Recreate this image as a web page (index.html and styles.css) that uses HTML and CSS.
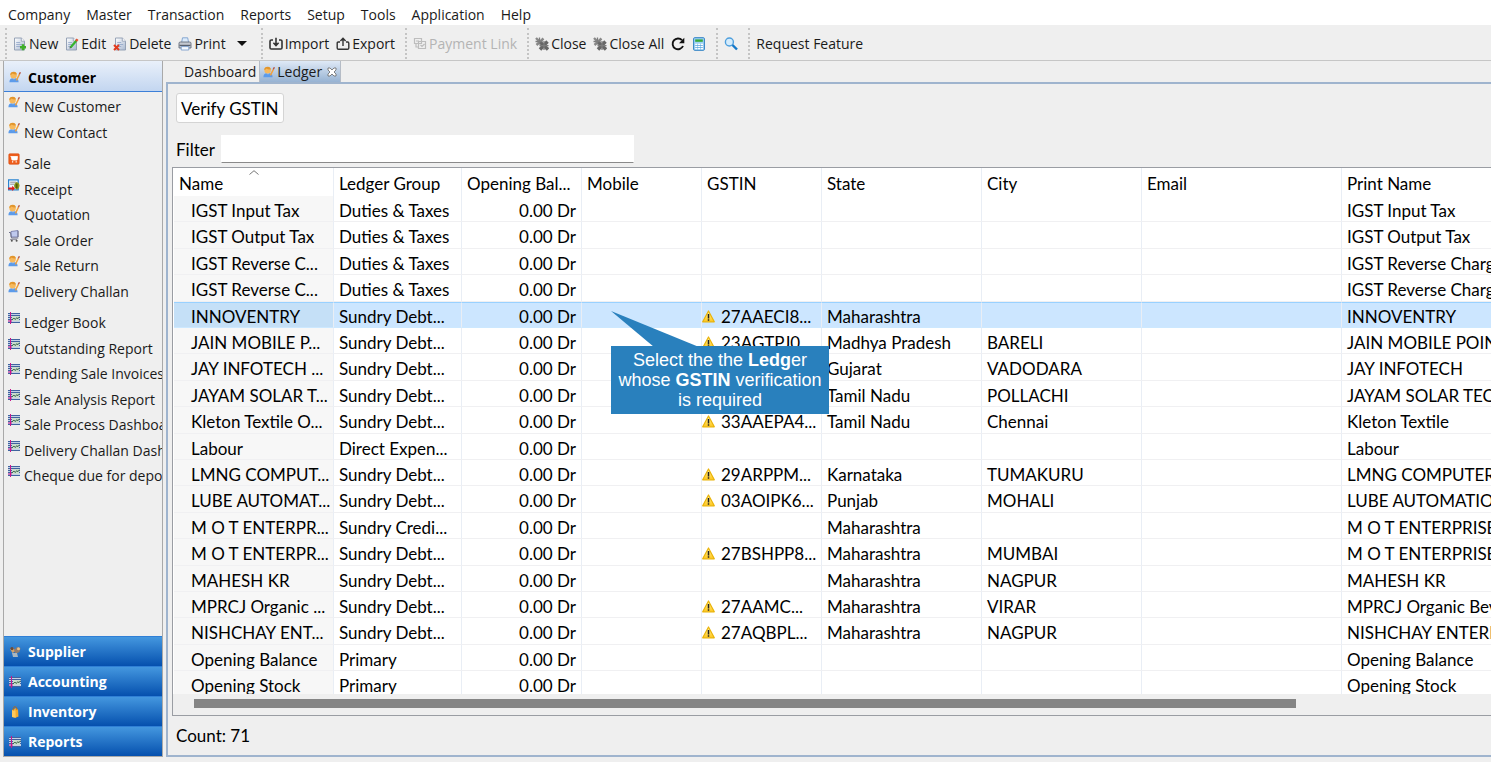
FILE: index.html
```html
<!DOCTYPE html>
<html lang="en">
<head>
    <meta charset="utf-8">
    <title>Ledger</title>
    <link rel="stylesheet" href="styles.css">
</head>
<body>
    <!-- Shared icons -->
    <svg class="sprite" aria-hidden="true">
        <defs>
            <linearGradient id="paper" x1="0" y1="0" x2="1" y2="1">
                <stop offset="0" stop-color="#ffffff"/>
                <stop offset="1" stop-color="#a9b8d0"/>
            </linearGradient>
            <linearGradient id="warn" x1="0" y1="0" x2="0" y2="1">
                <stop offset="0" stop-color="#fff2a0"/>
                <stop offset="1" stop-color="#ffc61a"/>
            </linearGradient>
        </defs>
        <symbol id="i-page" viewBox="0 0 14 14">
            <path d="M1.5 1h6.8l3.2 3.2V13h-10z" fill="url(#paper)" stroke="#8d9bb0" stroke-width=".9"/>
            <path d="M8.3 1v3.2h3.2" fill="#fff" stroke="#8d9bb0" stroke-width=".8"/>
            <path d="M3.2 5.5h4M3.2 7.5h6M3.2 9.5h4" stroke="#8fa5c8" stroke-width=".8"/>
        </symbol>
        <symbol id="i-new" viewBox="0 0 14 14">
            <use href="#i-page"/>
            <path d="M10 7.2v6M7 10.2h6" stroke="#3fae2a" stroke-width="2.4"/>
        </symbol>
        <symbol id="i-edit" viewBox="0 0 14 14">
            <use href="#i-page"/>
            <path d="M5.5 10.5L11.5 3.5" stroke="#37b32e" stroke-width="2.2"/>
            <path d="M11 4l1.6-1.8" stroke="#e2502f" stroke-width="2.4"/>
            <path d="M4.5 11.6l.4-1.8 1.4 1.1z" fill="#444"/>
        </symbol>
        <symbol id="i-delete" viewBox="0 0 14 14">
            <use href="#i-page" x="1"/>
            <path d="M1 8l5 5M6 8l-5 5" stroke="#e23a1c" stroke-width="2"/>
        </symbol>
        <symbol id="i-print" viewBox="0 0 14 14">
            <path d="M3.5 6L4.5.8h5.2L10.7 6z" fill="#dcebfb" stroke="#6f96c8" stroke-width=".8"/>
            <path d="M1 6.2q0-1.2 1.4-1.2h9.2q1.4 0 1.4 1.2V11H1z" fill="#c3c8d0" stroke="#656d7a" stroke-width=".9"/>
            <path d="M1.5 8.4h11" stroke="#59616e" stroke-width="1.2"/>
            <path d="M3.2 9.6h7.6V13H3.2z" fill="#f6faff" stroke="#6f96c8" stroke-width=".8"/>
        </symbol>
        <symbol id="i-import" viewBox="0 0 14 14">
            <path d="M4 3H2.3Q1 3 1 4.3v6.4Q1 12 2.3 12h9.4q1.3 0 1.3-1.3V4.3Q13 3 11.7 3H10M7 .8v7M4.4 5.8L7 8.5l2.6-2.7" fill="none" stroke="#333" stroke-width="1.6"/>
        </symbol>
        <symbol id="i-export" viewBox="0 0 14 14">
            <path d="M4 5H2.3Q1.2 5 1.2 6.2V11q0 1.3 1.3 1.3h9Q12.8 12.3 12.8 11V6.2Q12.8 5 11.7 5H10M7 9V1.5M4.4 4L7 1.3 9.6 4" fill="none" stroke="#333" stroke-width="1.4"/>
        </symbol>
        <symbol id="i-pay" viewBox="0 0 14 14">
            <path d="M1.5 1.5h7v5h-7zM5.5 4.5h7v7h-7zM3 4h3M7.5 8l1.5 1.5L11.5 7M3 7v3h2" fill="none" stroke="#bdbdbd" stroke-width="1.2"/>
        </symbol>
        <symbol id="i-close" viewBox="0 0 14 14">
            <path d="M1 1l7 7M8.5 1.5L1.5 8" stroke="#888" stroke-width="2.4"/>
            <path d="M5 5l8 7.5M12.5 4.5L5 12.5" stroke="#666" stroke-width="3.4"/>
            <path d="M.5 4.5h7M4.5.5v7M9 4v9M4.5 8.7h9" stroke="#7d7d7d" stroke-width="1.3"/>
        </symbol>
        <symbol id="i-refresh" viewBox="0 0 14 14">
            <path d="M12 9A5.4 5.4 0 1 1 11 3.2" fill="none" stroke="#111" stroke-width="1.9"/>
            <path d="M13.3.8v5.4H8z" fill="#111"/>
        </symbol>
        <symbol id="i-calc" viewBox="0 0 14 14">
            <rect x="1.6" y=".7" width="10.8" height="12.6" rx="1" fill="#9fd2f5" stroke="#2f80c3"/>
            <path d="M3.2 3.6h7.6" stroke="#39a83a" stroke-width="2.4"/>
            <path d="M3.2 7.5h2m.9 0h2m.9 0h2M3.2 9.5h2m.9 0h2m.9 0h2M3.2 11.5h2m.9 0h2m.9 0h2" stroke="#fff" stroke-width="1.3"/>
            <path d="M3.2 8.5h7.6M3.2 10.5h7.6" stroke="#4d97d2" stroke-width=".6"/>
        </symbol>
        <symbol id="i-search" viewBox="0 0 14 14">
            <circle cx="5.4" cy="5" r="4" fill="#d5ecfc" stroke="#4e9fdd" stroke-width="1.4"/>
            <path d="M8.5 8l4.5 4.5" stroke="#1479c9" stroke-width="2.4"/>
        </symbol>
        <symbol id="i-user" viewBox="0 0 12 12">
            <path d="M.4 11.3q0-4 3.4-4h2.4q3.4 0 3.4 4z" fill="#5c9bea"/>
            <path d="M3.600 7.300L5 8.600l1.400-1.300z" fill="#a9cbf5"/>
            <circle cx="4.6" cy="4.3" r="3.2" fill="#f7b95c"/>
            <path d="M1.2 4q.2-3.3 3.6-3.3Q7.6.7 7.8 3.4 4.8 3.6 3.6 2.4 2.8 3.8 1.2 4z" fill="#e2952c"/>
            <path d="M7.4 9.4L10.4 3.4" stroke="#f3a13b" stroke-width="1.5"/>
            <path d="M10.3 3.4L11.4 1.2" stroke="#b5533f" stroke-width="1.4"/>
        </symbol>
        <symbol id="i-sale" viewBox="0 0 12 12">
            <rect x=".8" y=".8" width="10.4" height="10.4" rx="1" fill="#ee5f1d" stroke="#d9480c" stroke-width=".6"/>
            <path d="M2.500 3.500h7L9 7H4L3.200 3.500" fill="#fff" stroke="#fff" stroke-width=".8"/>
            <path d="M4 8.800h1.200m2.400 0h1.200" stroke="#fff" stroke-width="1.2"/>
        </symbol>
        <symbol id="i-receipt" viewBox="0 0 12 12">
            <path d="M.6.8h9.600v10H.6z" fill="#eef6ff" stroke="#2b84d0" stroke-width="1.2"/>
            <path d="M2.200 3.200h6M2.200 5.200h4" stroke="#888" stroke-width=".9"/>
            <path d="M8.500 3q3 .8 3 3.800t-2.600 4Q6 9.500 6 6.800T8.500 3z" fill="#8d9a1c"/>
            <path d="M8.700 4.500v5M7.400 6h2.600M7.400 8h2.600" stroke="#454f08" stroke-width=".8"/>
            <path d="M.2 8.500h4V6.800l2.800 2.700-2.800 2.500v-1.600h-4z" fill="#e01b1b"/>
        </symbol>
        <symbol id="i-order" viewBox="0 0 12 12">
            <path d="M3 1.500l7-1v6.500H3z" fill="#bfc9ee" stroke="#6e74a3" stroke-width=".8"/>
            <path d="M1 2.500h1.500l1 5.500h6.800M10 7V1" fill="none" stroke="#70738c"/>
            <path d="M2 9.500h7" stroke="#9b9ba6" stroke-width="1.2"/>
            <circle cx="3.8" cy="10.7" r="1" fill="#555"/>
            <circle cx="8.6" cy="10.7" r="1" fill="#555"/>
        </symbol>
        <symbol id="i-report" viewBox="0 0 12 12">
            <path d="M0 1h12v10H0z" fill="#c3d1e6"/>
            <path d="M0 1.5h12M0 3.5h12M0 5.5h12M0 7.5h12M0 10.5h12" stroke="#40639f" stroke-width="1"/>
            <path d="M4 4h7v5H4z" fill="#c9dccd"/>
            <path d="M4 8l1.8-2 1.500 1.500L8.700 5.700l1.200 1L11.500 4.700" fill="none" stroke="#28583a" stroke-width=".9"/>
            <path d="M2.500 0v12M0 9h4" stroke="#c8178c" stroke-width="1"/>
        </symbol>
        <symbol id="i-supplier" viewBox="0 0 12 12">
            <path d="M1 3l3-1.500L6.500 5l-3 2z" fill="#d7a36a"/>
            <path d="M5 4l3-3 3.500 1-1 4-4 2z" fill="#8f7c6e"/>
            <path d="M3 7h5l1 4H4z" fill="#a9b6bf"/>
            <circle cx="3" cy="2.6" r="1.6" fill="#6a4a38"/>
            <circle cx="9.5" cy="2.8" r="1.5" fill="#e8c08a"/>
        </symbol>
        <symbol id="i-bag" viewBox="0 0 12 12">
            <path d="M3 4l4-2 2 1.500.5 7-3 1.300L3 11z" fill="#f5ab2c"/>
            <path d="M3 4l3.500.6.2 7.200L3 11z" fill="#ffc95c"/>
            <path d="M4.200 4.500Q4 .5 6 .6t2 3.500" fill="none" stroke="#b3661a" stroke-width=".9"/>
        </symbol>
        <symbol id="i-warn" viewBox="0 0 13 13">
            <path d="M6.5 1L12.3 11.800H.7z" fill="url(#warn)" stroke="#eab308" stroke-width="1.2" stroke-linejoin="round"/>
            <path d="M6.500 4v4.400M6.500 9.300v1.500" stroke="#222" stroke-width="1.5"/>
        </symbol>
    </svg>

    <!-- Menu -->
    <nav class="menubar">
        <a href="#">Company</a>
        <a href="#">Master</a>
        <a href="#">Transaction</a>
        <a href="#">Reports</a>
        <a href="#">Setup</a>
        <a href="#">Tools</a>
        <a href="#">Application</a>
        <a href="#">Help</a>
    </nav>

    <!-- Toolbar -->
    <div class="toolbar">
        <div class="tool-group">
            <button><svg><use href="#i-new"/></svg>New</button>
            <button><svg><use href="#i-edit"/></svg>Edit</button>
            <button><svg><use href="#i-delete"/></svg>Delete</button>
            <button><svg><use href="#i-print"/></svg>Print</button>
            <button class="drop" aria-label="Print options"></button>
        </div>
        <div class="tool-group">
            <button><svg><use href="#i-import"/></svg>Import</button>
            <button><svg><use href="#i-export"/></svg>Export</button>
        </div>
        <div class="tool-group">
            <button disabled><svg><use href="#i-pay"/></svg>Payment Link</button>
        </div>
        <div class="tool-group">
            <button><svg><use href="#i-close"/></svg>Close</button>
            <button><svg><use href="#i-close"/></svg>Close All</button>
            <button aria-label="Refresh"><svg><use href="#i-refresh"/></svg></button>
            <button aria-label="Calculator"><svg><use href="#i-calc"/></svg></button>
        </div>
        <div class="tool-group">
            <button aria-label="Search"><svg><use href="#i-search"/></svg></button>
        </div>
        <div class="tool-group">
            <button>Request Feature</button>
        </div>
    </div>

    <div class="workspace">
        <!-- Sidebar -->
        <aside class="sidebar">
            <button class="section-open"><svg><use href="#i-user"/></svg>Customer</button>
            <div class="links">
                <ul>
                    <li><a href="#"><svg><use href="#i-user"/></svg>New Customer</a></li>
                    <li><a href="#"><svg><use href="#i-user"/></svg>New Contact</a></li>
                </ul>
                <ul>
                    <li><a href="#"><svg><use href="#i-sale"/></svg>Sale</a></li>
                    <li><a href="#"><svg><use href="#i-receipt"/></svg>Receipt</a></li>
                    <li><a href="#"><svg><use href="#i-user"/></svg>Quotation</a></li>
                    <li><a href="#"><svg><use href="#i-order"/></svg>Sale Order</a></li>
                    <li><a href="#"><svg><use href="#i-user"/></svg>Sale Return</a></li>
                    <li><a href="#"><svg><use href="#i-user"/></svg>Delivery Challan</a></li>
                </ul>
                <ul>
                    <li><a href="#"><svg><use href="#i-report"/></svg>Ledger Book</a></li>
                    <li><a href="#"><svg><use href="#i-report"/></svg>Outstanding Report</a></li>
                    <li><a href="#"><svg><use href="#i-report"/></svg>Pending Sale Invoices</a></li>
                    <li><a href="#"><svg><use href="#i-report"/></svg>Sale Analysis Report</a></li>
                    <li><a href="#"><svg><use href="#i-report"/></svg>Sale Process Dashboard</a></li>
                    <li><a href="#"><svg><use href="#i-report"/></svg>Delivery Challan Dashboard</a></li>
                    <li><a href="#"><svg><use href="#i-report"/></svg>Cheque due for deposit</a></li>
                </ul>
            </div>
            <button class="section"><svg><use href="#i-supplier"/></svg>Supplier</button>
            <button class="section"><svg><use href="#i-report"/></svg>Accounting</button>
            <button class="section"><svg><use href="#i-bag"/></svg>Inventory</button>
            <button class="section"><svg><use href="#i-report"/></svg>Reports</button>
        </aside>

        <!-- Editor area -->
        <main class="editor">
            <div class="tabs">
                <button class="tab">Dashboard</button>
                <button class="tab active">
                    <svg><use href="#i-user"/></svg>Ledger
                    <svg class="tab-close" viewBox="0 0 10 10"><path d="M1 1h2l2 2 2-2h2v2L7 5l2 2v2H7L5 7 3 9H1V7l2-2-2-2z" fill="#fff" stroke="#666" stroke-width=".8"/></svg>
                </button>
            </div>
            <div class="panel">
                <button class="verify">Verify GSTIN</button>
                <div class="filter">
                    <label for="filter">Filter</label>
                    <input type="text" id="filter">
                </div>
                <div class="grid">
                    <div class="grid-view">
                        <table>
                            <colgroup>
                                <col class="w-160"><col class="w-128"><col class="w-120"><col class="w-120"><col class="w-120"><col class="w-160"><col class="w-160"><col class="w-200"><col class="w-200">
                            </colgroup>
                            <thead>
                                <tr>
                                    <th>Name<svg class="sort" viewBox="0 0 10 5"><path d="M.5 4.5L5 .7l4.5 3.8" fill="none" stroke="#777"/></svg></th>
                                    <th>Ledger Group</th>
                                    <th>Opening Bal...</th>
                                    <th>Mobile</th>
                                    <th>GSTIN</th>
                                    <th>State</th>
                                    <th>City</th>
                                    <th>Email</th>
                                    <th>Print Name</th>
                                </tr>
                            </thead>
                            <tbody>
                                <tr><td>IGST Input Tax</td><td>Duties &amp; Taxes</td><td>0.00 Dr</td><td></td><td></td><td></td><td></td><td></td><td>IGST Input Tax</td></tr>
                                <tr><td>IGST Output Tax</td><td>Duties &amp; Taxes</td><td>0.00 Dr</td><td></td><td></td><td></td><td></td><td></td><td>IGST Output Tax</td></tr>
                                <tr><td>IGST Reverse C...</td><td>Duties &amp; Taxes</td><td>0.00 Dr</td><td></td><td></td><td></td><td></td><td></td><td>IGST Reverse Charge</td></tr>
                                <tr><td>IGST Reverse C...</td><td>Duties &amp; Taxes</td><td>0.00 Dr</td><td></td><td></td><td></td><td></td><td></td><td>IGST Reverse Charge</td></tr>
                                <tr class="selected">
                                    <td>INNOVENTRY</td><td>Sundry Debt...</td><td>0.00 Dr</td>
                                    <td class="callout-cell">
                                        <div class="callout">
                                            <svg viewBox="0 0 90 36"><path d="M0 0L88 36H43z" fill="#2980bd"/></svg>
                                            <p>Select the the <b>Ledg</b>er<br>whose <b>GSTIN</b> verification<br>is required</p>
                                        </div>
                                    </td>
                                    <td><svg><use href="#i-warn"/></svg>27AAECI8...</td><td>Maharashtra</td><td></td><td></td><td>INNOVENTRY</td>
                                </tr>
                                <tr><td>JAIN MOBILE P...</td><td>Sundry Debt...</td><td>0.00 Dr</td><td></td><td><svg><use href="#i-warn"/></svg>23AGTPJ0...</td><td>Madhya Pradesh</td><td>BARELI</td><td></td><td>JAIN MOBILE POINT</td></tr>
                                <tr><td>JAY INFOTECH ...</td><td>Sundry Debt...</td><td>0.00 Dr</td><td></td><td></td><td>Gujarat</td><td>VADODARA</td><td></td><td>JAY INFOTECH</td></tr>
                                <tr><td>JAYAM SOLAR T...</td><td>Sundry Debt...</td><td>0.00 Dr</td><td></td><td></td><td>Tamil Nadu</td><td>POLLACHI</td><td></td><td>JAYAM SOLAR TECH</td></tr>
                                <tr><td>Kleton Textile O...</td><td>Sundry Debt...</td><td>0.00 Dr</td><td></td><td><svg><use href="#i-warn"/></svg>33AAEPA4...</td><td>Tamil Nadu</td><td>Chennai</td><td></td><td>Kleton Textile</td></tr>
                                <tr><td>Labour</td><td>Direct Expen...</td><td>0.00 Dr</td><td></td><td></td><td></td><td></td><td></td><td>Labour</td></tr>
                                <tr><td>LMNG COMPUT...</td><td>Sundry Debt...</td><td>0.00 Dr</td><td></td><td><svg><use href="#i-warn"/></svg>29ARPPM...</td><td>Karnataka</td><td>TUMAKURU</td><td></td><td>LMNG COMPUTERS</td></tr>
                                <tr><td>LUBE AUTOMAT...</td><td>Sundry Debt...</td><td>0.00 Dr</td><td></td><td><svg><use href="#i-warn"/></svg>03AOIPK6...</td><td>Punjab</td><td>MOHALI</td><td></td><td>LUBE AUTOMATION</td></tr>
                                <tr><td>M O T ENTERPR...</td><td>Sundry Credi...</td><td>0.00 Dr</td><td></td><td></td><td>Maharashtra</td><td></td><td></td><td>M O T ENTERPRISES</td></tr>
                                <tr><td>M O T ENTERPR...</td><td>Sundry Debt...</td><td>0.00 Dr</td><td></td><td><svg><use href="#i-warn"/></svg>27BSHPP8...</td><td>Maharashtra</td><td>MUMBAI</td><td></td><td>M O T ENTERPRISES</td></tr>
                                <tr><td>MAHESH KR</td><td>Sundry Debt...</td><td>0.00 Dr</td><td></td><td></td><td>Maharashtra</td><td>NAGPUR</td><td></td><td>MAHESH KR</td></tr>
                                <tr><td>MPRCJ Organic ...</td><td>Sundry Debt...</td><td>0.00 Dr</td><td></td><td><svg><use href="#i-warn"/></svg>27AAMC...</td><td>Maharashtra</td><td>VIRAR</td><td></td><td>MPRCJ Organic Beverages</td></tr>
                                <tr><td>NISHCHAY ENT...</td><td>Sundry Debt...</td><td>0.00 Dr</td><td></td><td><svg><use href="#i-warn"/></svg>27AQBPL...</td><td>Maharashtra</td><td>NAGPUR</td><td></td><td>NISHCHAY ENTERPRISES</td></tr>
                                <tr><td>Opening Balance</td><td>Primary</td><td>0.00 Dr</td><td></td><td></td><td></td><td></td><td></td><td>Opening Balance</td></tr>
                                <tr><td>Opening Stock</td><td>Primary</td><td>0.00 Dr</td><td></td><td></td><td></td><td></td><td></td><td>Opening Stock</td></tr>
                            </tbody>
                        </table>
                    </div>
                    <div class="scrollbar"><div class="thumb"></div></div>
                </div>
                <div class="count">Count: 71</div>
            </div>
        </main>
    </div>
</body>
</html>
```

FILE: styles.css
```css
* {
    box-sizing: border-box;
}

body {
    margin: 0;
    height: 100vh;
    display: flex;
    flex-direction: column;
    overflow: hidden;
    background: #efefef;
    color: #1a1a1a;
    font-family: "Open Sans", sans-serif;
    font-size: 14px;
}

a {
    color: inherit;
    text-decoration: none;
}

button {
    display: flex;
    align-items: center;
    padding: 0;
    border: 0;
    background: none;
    color: inherit;
    font: inherit;
    white-space: nowrap;
}

svg {
    flex: none;
}

.sprite {
    position: absolute;
    width: 0;
    height: 0;
}

/* Menu */
.menubar {
    display: flex;
    gap: 16px;
    height: 25px;
    padding: 5px 8px 0;
    line-height: 20px;
    background: #fff;
}

/* Toolbar */
.toolbar {
    display: flex;
    height: 36px;
    padding: 3px 0 1px 5px;
    border-bottom: 1px solid #c6c6c6;
}

.tool-group {
    display: flex;
    align-items: center;
    gap: 7px;
    padding: 0 10px 0 6px;
    border-left: 2px dotted #c4c4c4;
}

.tool-group button {
    gap: 2px;
}

.tool-group svg {
    width: 14px;
    height: 14px;
}

.tool-group button:disabled {
    color: #b4b4b4;
}

.tool-group .drop {
    margin: 0 4px;
    border: 5px solid transparent;
    border-top-color: #111;
    border-bottom: 0;
}

/* Sidebar */
.workspace {
    flex: 1;
    display: flex;
    gap: 3px;
    min-height: 0;
    padding: 0 0 5px 3px;
}

.sidebar {
    flex: none;
    width: 160px;
    display: flex;
    flex-direction: column;
    border: 1px solid #a9a9a9;
    border-top: 0;
    overflow: hidden;
}

.section,
.section-open {
    flex: none;
    gap: 7px;
    padding-left: 5px;
    font-weight: bold;
}

.section-open {
    height: 31px;
    padding-top: 2px;
    border-bottom: 1px solid #3c7fd8;
    background: linear-gradient(#e9f0fa, #c3d6f0);
    color: #000;
}

.section {
    height: 30px;
    border-top: 1px solid #2f7fd6;
    background: linear-gradient(#4497df, #0550ae);
    color: #fff;
}

.sidebar svg {
    width: 12px;
    height: 12px;
}

.links {
    flex: 1;
}

.links ul {
    margin: 0 0 6px;
    padding: 0;
    list-style: none;
}

.links li {
    height: 26px;
}

.links li:nth-child(2n) {
    height: 25px;
}

.links a {
    display: flex;
    gap: 4px;
    padding: 5px 0 0 4px;
    line-height: 20px;
    white-space: nowrap;
}

.links svg {
    margin-top: -1px;
}

/* Tabs */
.editor {
    flex: 1;
    min-width: 0;
    display: flex;
    flex-direction: column;
}

.tabs {
    display: flex;
    height: 21px;
    padding-left: 13px;
}

.tab {
    gap: 2px;
    padding: 0 3px 0 5px;
}

.tab.active {
    border: 1px solid #b5bcc6;
    border-width: 0 1px;
    padding-left: 3px;
    background: linear-gradient(#dfe9f6, #97b3d3);
}

.tab svg {
    width: 12px;
    height: 12px;
}

.tab .tab-close {
    width: 10px;
    height: 10px;
    margin-left: 3px;
}

/* Ledger panel */
.panel {
    flex: 1;
    display: flex;
    flex-direction: column;
    min-height: 0;
    padding: 9px 0 0 4px;
    border: 2px solid #9fb4ce;
    border-right: 0;
    color: #000;
    font-family: Lato, sans-serif;
    font-size: 17px;
}

.verify {
    align-self: flex-start;
    height: 30px;
    margin-left: 4px;
    padding: 0 4px;
    border: 1px solid #d4d4d4;
    border-radius: 3px;
    background: #fdfdfd;
}

.filter {
    display: flex;
    align-items: center;
    gap: 6px;
    margin: 12px 0 4px 4px;
}

.filter input {
    width: 413px;
    height: 28px;
    border: 1px solid #fff;
    border-bottom-color: #8a8a8a;
    background: #fff;
    font: inherit;
}

.grid {
    flex: 1;
    display: flex;
    flex-direction: column;
    min-height: 0;
    border: 1px solid #9a9da3;
    border-right: 0;
}

.grid-view {
    flex: 1;
    min-height: 0;
    padding-left: 1px;
    overflow: hidden;
    background: #fff;
}

table {
    width: 1368px;
    table-layout: fixed;
    border-collapse: separate;
    border-spacing: 0;
}

.w-120 {
    width: 120px;
}

.w-128 {
    width: 128px;
}

.w-160 {
    width: 160px;
}

.w-200 {
    width: 200px;
}

th,
td {
    padding: 0 5px;
    border-right: 1px solid #e9eef5;
    font-weight: normal;
    text-align: left;
    line-height: 20px;
    white-space: nowrap;
}

th {
    height: 28px;
    padding-top: 3px;
    position: relative;
}

.sort {
    position: absolute;
    top: 2px;
    left: 47%;
    width: 10px;
    height: 5px;
}

td {
    height: 26px;
    padding-top: 4px;
    border-bottom: 1px solid #f0f0f2;
}

tr:nth-child(5n+2) td,
tr:nth-child(5n+4) td {
    height: 27px;
}

td:first-child {
    padding-left: 17px;
    background: #f7f7f7;
}

td:nth-child(3) {
    text-align: right;
}

td:nth-child(5) {
    padding-left: 0;
}

td > svg {
    width: 13px;
    height: 13px;
    margin-right: 6px;
}

.selected td {
    padding-top: 3px;
    border-top: 1px solid #99d1ff;
    border-bottom-color: #cce8ff;
    background: #cce6ff;
}

.selected td:first-child {
    background: #c5e0f7;
}

/* Callout over the grid */
.callout-cell {
    position: relative;
}

.callout {
    position: absolute;
    top: 8px;
    left: 29px;
    z-index: 1;
    width: 218px;
}

.callout svg {
    display: block;
    width: 90px;
    height: 36px;
}

.callout p {
    margin: -1px 0 0;
    padding: 4px 0;
    background: #2980bd;
    color: #fff;
    font-family: "Liberation Sans", Arial, sans-serif;
    font-size: 18px;
    line-height: 20px;
    text-align: center;
}

.scrollbar {
    height: 21px;
    padding: 5px 0 0 21px;
}

.thumb {
    width: 85%;
    height: 9px;
    background: #858585;
}

.count {
    padding: 10px 4px 9px;
    line-height: 20px;
}
```
